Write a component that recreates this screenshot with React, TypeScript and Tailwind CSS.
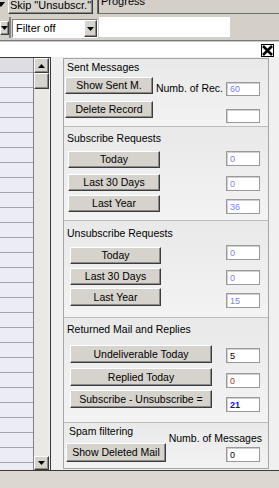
const btn =
  'flex items-center justify-center shrink-0 bg-[#d6d3cc] border border-t-white border-l-white border-r-[#3c3c3c] border-b-[#3c3c3c] shadow-[inset_-1px_-1px_0_#8a8a8a] text-black leading-none whitespace-nowrap'

function Tri({ up = false }: { up?: boolean }) {
  return (
    <svg width="7" height="4" viewBox="0 0 7 4">
      <polygon points={up ? '3.5,0 7,4 0,4' : '0,0 7,0 3.5,4'} fill="black" />
    </svg>
  )
}

function Field({ value = '', color = 'text-[#7d7dff]', className = '' }: { value?: string; color?: string; className?: string }) {
  return (
    <div
      className={`w-[34px] shrink-0 bg-white border border-[#9a9a9a] shadow-[inset_1px_1px_0_#d0d0d0] flex items-end pl-[3px] pb-[1px] text-[9px] leading-[9px] ${color} ${className}`}
    >
      {value}
    </div>
  )
}

function Title({ children, className = '' }: { children: string; className?: string }) {
  return <div className={`h-[13px] leading-[13px] pl-[3px] whitespace-nowrap ${className}`}>{children}</div>
}

export default function App() {
  return (
    <div className="w-[279px] h-[488px] overflow-hidden bg-[#d4d0c8] font-['Liberation_Sans',Arial,sans-serif] text-[10.5px] text-black flex flex-col">
      {/* Toolbar row 1 */}
      <div className="h-[14px] shrink-0 flex items-end">
        <div className="w-[5px] h-[14px] overflow-hidden">
          <svg width="5" height="10" viewBox="0 0 5 10">
            <polygon points="-3,2 5,2 1,7" fill="black" />
          </svg>
        </div>
        <div className={`${btn} ml-[3px] w-[85px] h-[18px] text-[11px]`}>Skip "Unsubscr."</div>
        <div className="ml-[4px] flex-1 h-[22px] border-l border-b border-[#6e6e6e] shadow-[inset_1px_0_0_#404040] pl-[3px] pt-[3px] text-[11px] leading-[13px]">
          Progress
        </div>
      </div>

      {/* Toolbar row 2 */}
      <div className="mt-[3px] h-[21px] shrink-0 flex">
        <div className="w-[11px] h-full flex items-start pt-[4px] border-r-2 border-[#808080]">
          <div className={`${btn} w-[9px] h-[14px]`}>
            <Tri />
          </div>
        </div>
        <div className="ml-[1px] mt-[2px] w-[86px] h-[19px] border border-t-[#808080] border-l-[#808080] border-r-white border-b-white bg-white flex">
          <div className="flex-1 flex items-center pl-[3px] text-[11px]">Filter off</div>
          <div className={`${btn} w-[13px] h-full`}>
            <Tri />
          </div>
        </div>
        <div className="ml-[1px] w-[131px] h-[20px] bg-white" />
      </div>

      <div className="h-[2px] shrink-0" />
      <div className="h-[1px] shrink-0 bg-[#7a7a7a]" />
      <div className="h-[1px] shrink-0 bg-[#c8c8c8]" />

      {/* Close band */}
      <div className="h-[15px] shrink-0 bg-white flex justify-end items-end pr-[5px]">
        <svg width="13" height="13" viewBox="0 0 13 13">
          <rect x="0.5" y="0.5" width="12" height="12" fill="white" stroke="black" />
          <path d="M2 2 L11 11 M11 2 L2 11" stroke="black" strokeWidth="2.6" />
        </svg>
      </div>

      {/* Main area */}
      <div className="h-[413px] shrink-0 bg-[#f0f0f0] flex">
        {/* List box */}
        <div className="w-[51px] h-full flex border-t border-r border-[#3a3a3a]">
          <div className="w-[34px] h-full flex flex-col overflow-hidden bg-[#ececf4] border-r border-[#808080]">
            <div className="h-[15px] shrink-0 bg-[#dedde3] border-b border-[#a3a3ab]" />
            {Array.from({ length: 27 }).map((_, i) => (
              <div key={i} className="h-[15px] shrink-0 border-b border-[#a3a3ab]" />
            ))}
          </div>
          <div className="w-[15px] h-full flex flex-col bg-[#ebe9e3]">
            <div className={`${btn} w-[15px] h-[15px]`}>
              <Tri up />
            </div>
            <div className={`${btn} w-[15px] h-[16px]`} />
            <div className="flex-1" />
            <div className={`${btn} w-[15px] h-[14px]`}>
              <Tri />
            </div>
          </div>
        </div>

        {/* Statistics panel */}
        <div className="ml-[12px] mt-[1px] w-[206px] h-[411px] border border-[#a5a5a5] bg-[#f2f2f2] flex flex-col">
          {/* Sent Messages */}
          <div className="h-[68px] shrink-0 border-b border-[#bdbdbd] pt-[2px] bg-linear-to-b from-[#e9e9e9] to-[#f3f3f3]">
            <Title>Sent Messages</Title>
            <div className="mt-[3px] flex items-start justify-between pl-[1px] pr-[8px]">
              <div className={`${btn} w-[88px] h-[17px]`}>Show Sent M.</div>
              <div className="flex items-start gap-[3px]">
                <div className="mt-[5px] leading-[12px] whitespace-nowrap">Numb. of Rec.</div>
                <Field value="60" className="mt-[5px] h-[14px]" />
              </div>
            </div>
            <div className="mt-[5px] flex items-start justify-between pl-[1px] pr-[8px]">
              <div className={`${btn} w-[88px] h-[17px]`}>Delete Record</div>
              <Field className="mt-[8px] h-[14px]" />
            </div>
          </div>

          {/* Subscribe Requests */}
          <div className="h-[94px] shrink-0 border-b border-[#bdbdbd] pt-[5px] bg-linear-to-b from-[#e9e9e9] to-[#f3f3f3]">
            <Title>Subscribe Requests</Title>
            <div className="mt-[6px] flex items-start justify-between pl-[4px] pr-[8px]">
              <div className={`${btn} w-[92px] h-[17px]`}>Today</div>
              <Field value="0" className="h-[15px]" />
            </div>
            <div className="mt-[6px] flex items-start justify-between pl-[4px] pr-[8px]">
              <div className={`${btn} w-[92px] h-[17px]`}>Last 30 Days</div>
              <Field value="0" className="mt-[2px] h-[15px]" />
            </div>
            <div className="mt-[4px] flex items-start justify-between pl-[4px] pr-[8px]">
              <div className={`${btn} w-[92px] h-[17px]`}>Last Year</div>
              <Field value="36" className="mt-[4px] h-[15px]" />
            </div>
          </div>

          {/* Unsubscribe Requests */}
          <div className="h-[97px] shrink-0 border-b border-[#bdbdbd] pt-[6px] bg-linear-to-b from-[#e9e9e9] to-[#f3f3f3]">
            <Title>Unsubscribe Requests</Title>
            <div className="mt-[5px] flex items-start justify-between pl-[6px] pr-[8px]">
              <div className={`${btn} mt-[2px] w-[91px] h-[17px]`}>Today</div>
              <Field value="0" className="h-[15px]" />
            </div>
            <div className="mt-[4px] flex items-start justify-between pl-[6px] pr-[8px]">
              <div className={`${btn} w-[91px] h-[17px]`}>Last 30 Days</div>
              <Field value="0" className="mt-[2px] h-[15px]" />
            </div>
            <div className="mt-[3px] flex items-start justify-between pl-[6px] pr-[8px]">
              <div className={`${btn} w-[91px] h-[18px]`}>Last Year</div>
              <Field value="15" className="mt-[5px] h-[15px]" />
            </div>
          </div>

          {/* Returned Mail and Replies */}
          <div className="h-[105px] shrink-0 border-b border-[#bdbdbd] pt-[5px] bg-linear-to-b from-[#e9e9e9] to-[#f3f3f3]">
            <Title>Returned Mail and Replies</Title>
            <div className="mt-[9px] flex items-start justify-between pl-[6px] pr-[8px]">
              <div className={`${btn} w-[142px] h-[18px]`}>Undeliverable Today</div>
              <Field value="5" color="text-black" className="mt-[3px] h-[15px]" />
            </div>
            <div className="mt-[5px] flex items-start justify-between pl-[6px] pr-[8px]">
              <div className={`${btn} w-[142px] h-[18px]`}>Replied Today</div>
              <Field value="0" color="text-[#c03030]" className="mt-[5px] h-[15px]" />
            </div>
            <div className="mt-[2px] flex items-start justify-between pl-[6px] pr-[8px]">
              <div className={`${btn} w-[142px] h-[18px]`}>Subscribe - Unsubscribe =</div>
              <Field value="21" color="text-[#1010e0] font-bold" className="mt-[7px] h-[15px]" />
            </div>
          </div>

          {/* Spam filtering */}
          <div className="flex-1 flex bg-linear-to-b from-[#e9e9e9] to-[#f3f3f3]">
            <div className="pl-[2px] pt-[2px] flex flex-col">
              <Title className="pl-[1px]">Spam filtering</Title>
              <div className={`${btn} mt-[5px] w-[100px] h-[19px]`}>Show Deleted Mail</div>
            </div>
            <div className="ml-auto pr-[6px] pt-[9px] flex flex-col items-end">
              <div className="h-[13px] leading-[13px] whitespace-nowrap">Numb. of Messages</div>
              <Field value="0" color="text-black" className="mt-[2px] mr-[2px] h-[15px]" />
            </div>
          </div>
        </div>
      </div>

      {/* Status area */}
      <div className="h-[1px] shrink-0 bg-[#3a3a3a]" />
      <div className="flex-1 bg-[#dcd8d0]" />
    </div>
  )
}
